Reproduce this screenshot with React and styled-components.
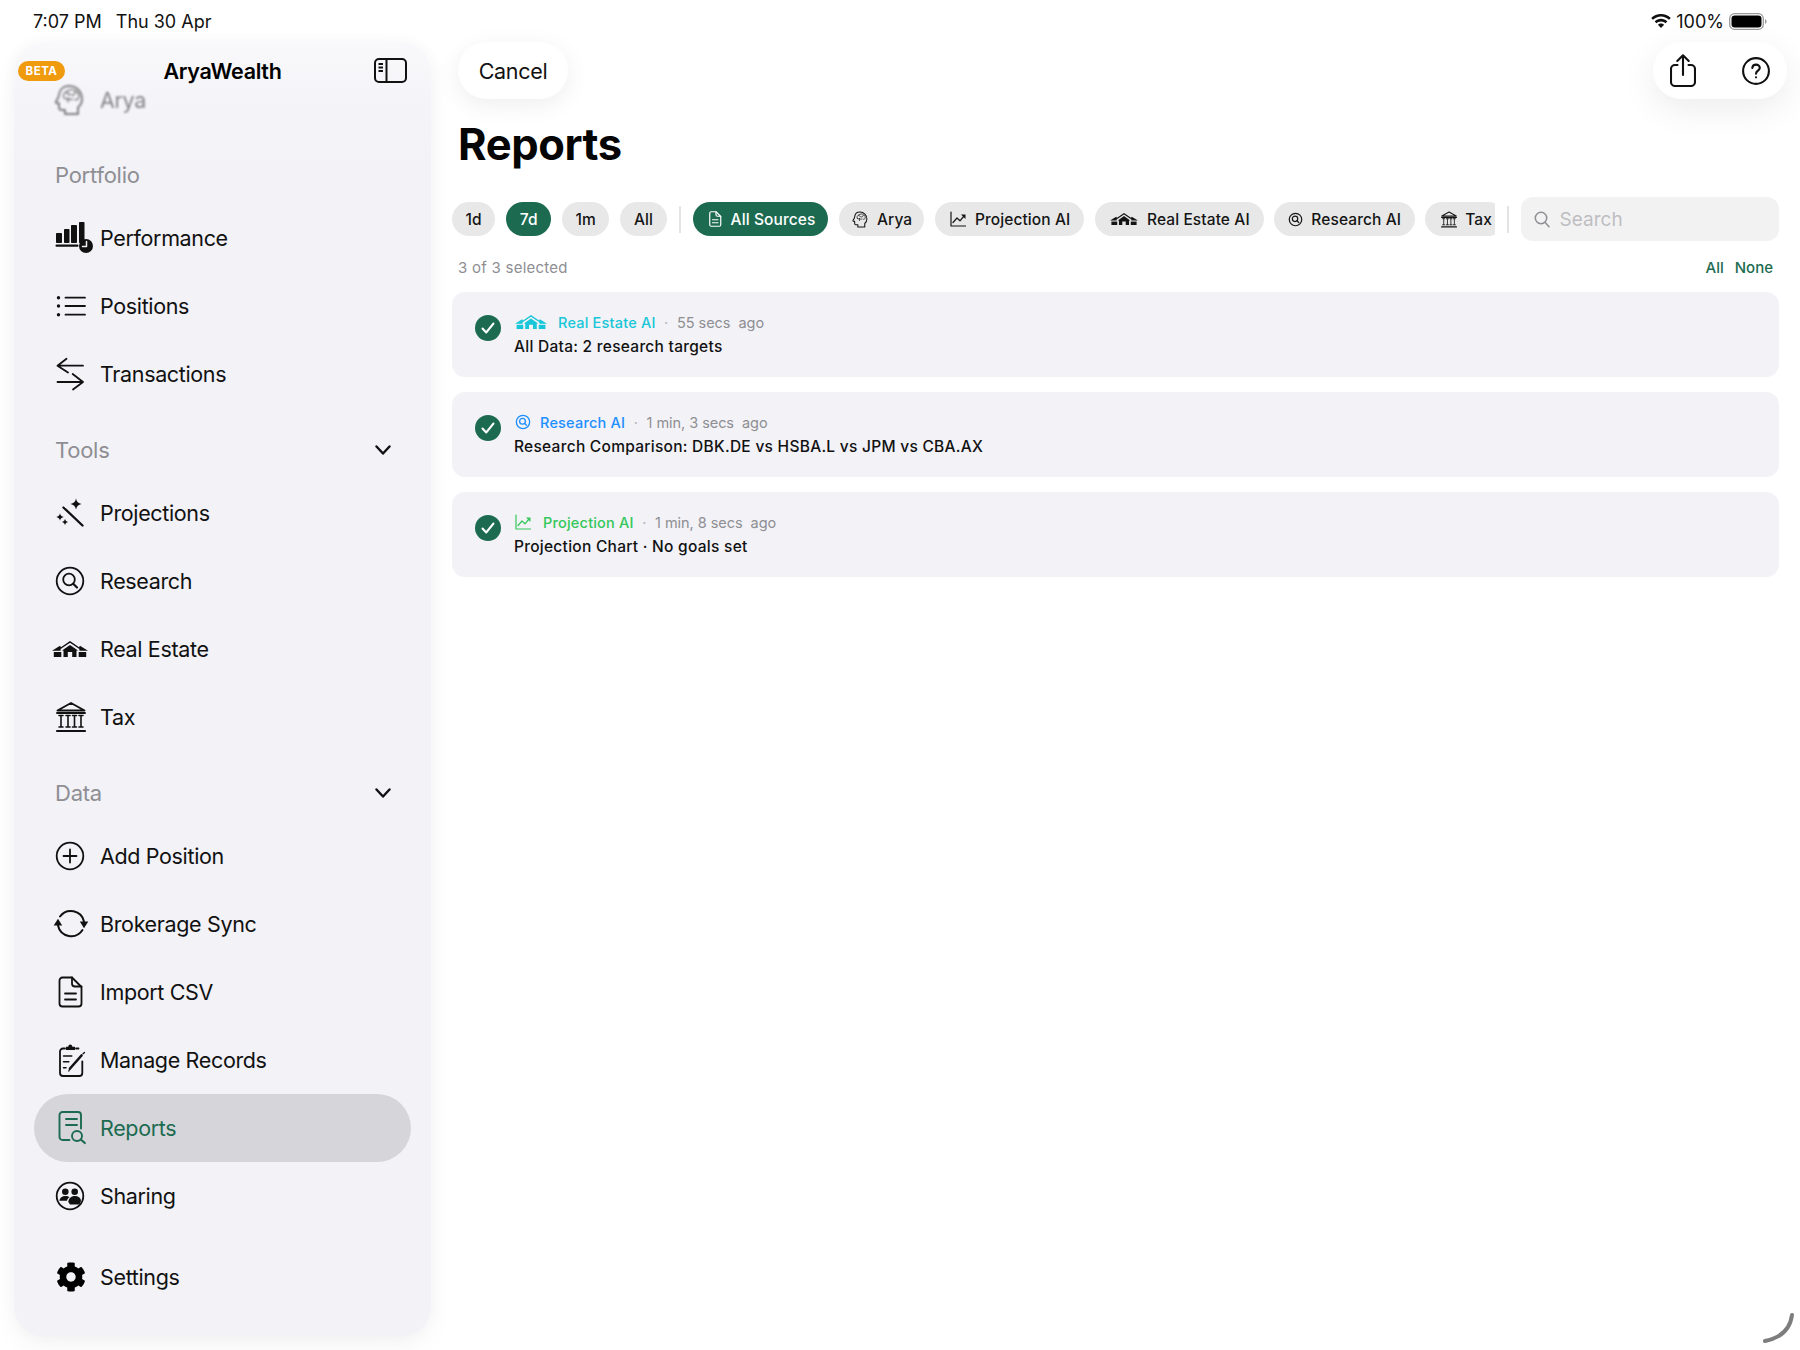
import React from "react";
import styled, { createGlobalStyle } from "styled-components";
import { FaCog } from "react-icons/fa";

const Global = createGlobalStyle`
  html, body { margin: 0; padding: 0; background: #fff; }
  body { font-family: Inter, "Noto Sans", sans-serif; color: #000; -webkit-font-smoothing: antialiased; }
  * { box-sizing: border-box; }
`;

const GREEN = "#1C6B50";

const Page = styled.div`
  position: relative; width: 1800px; height: 1350px; overflow: hidden; background: #fff;
  display: flex; flex-direction: column;
`;
const StatusBar = styled.div`
  height: 42px; flex: none; display: flex; justify-content: space-between; align-items: center;
  padding: 0 33px 0 33px; font-size: 18px; color: #111; 
`;
const StatusLeft = styled.div`display: flex; gap: 14px;`;
const StatusRight = styled.div`display: flex; align-items: center; gap: 5px; font-size: 18px;`;
const Body = styled.div`flex: 1; display: flex; min-height: 0;`;

const Sidebar = styled.aside`
  position: relative; width: 417px; margin: 0 1px 13px 14px; flex: none; border-radius: 30px;
  background: linear-gradient(#f9f9fb 0, #f3f3f8 80px, #f2f2f7 120px);
  box-shadow: 0 10px 28px rgba(0,0,0,.04), 0 0 16px rgba(0,0,0,.03);
  padding: 24px 20px 0;
`;
const SideHeader = styled.div`
  position: absolute; top: 8px; left: 0; right: 0; height: 42px;
  display: flex; align-items: center; justify-content: center;
`;
const Beta = styled.span`
  position: absolute; left: 4px; top: 11px; height: 20px; width: 47px; border-radius: 10px; background: #F09A0E;
  color: #fff; font-size: 11.5px; font-weight: 700; letter-spacing: .5px; display: flex; align-items: center; justify-content: center;
`;
const AppTitle = styled.span`font-size: 21.5px; font-weight: 600; letter-spacing: -.29px;`;
const ToggleBtn = styled.span`position: absolute; right: 24px; top: 8px; display: flex;`;

const Row = styled.div`
  height: 68px; display: flex; align-items: center; gap: 14px; padding-left: 20px; border-radius: 34px;
  font-size: 21.5px; letter-spacing: -.35px;
  color: ${p => (p.$active ? GREEN : "#111")};
  background: ${p => (p.$active ? "#D5D5DA" : "transparent")};
  margin-top: ${p => p.$mt || 0}px;
  ${p => p.$ghost && `filter: blur(1px); opacity: .5;`}
`;
const IconBox = styled.span`
  width: 32px; height: 32px; flex: none; display: flex; align-items: center; justify-content: center;
  svg { overflow: visible; display: block; }
`;
const SectionLabel = styled.div`
  height: 40px; margin-top: ${p => p.$mt}px; margin-bottom: 9px; padding: 0 20px 0 21px;
  display: flex; align-items: center; justify-content: space-between;
  font-size: 22px; color: #8e8e93; letter-spacing: -.25px;
`;

const Main = styled.main`
  flex: 1; min-width: 0; padding: 0 21px 0 20px; display: flex; flex-direction: column;
`;
const Toolbar = styled.div`display: flex; justify-content: space-between; height: 57px; flex: none;`;
const CancelBtn = styled.div`
  margin-left: 6px; width: 110px; height: 57px; border-radius: 29px; background: #fff;
  box-shadow: 0 6px 24px rgba(0,0,0,.07); display: flex; align-items: center; justify-content: center;
  font-size: 21.5px; color: #111; letter-spacing: -.3px;
`;
const ToolGroup = styled.div`
  margin-right: -8px; width: 134px; height: 57px; border-radius: 29px; background: #fff;
  box-shadow: 0 10px 34px rgba(0,0,0,.08); display: flex; align-items: center; justify-content: space-between; padding: 0 17px 0 17px;
`;
const Title = styled.h1`
  margin: 20px 0 0 6px; font-size: 43.5px; line-height: 50px; font-weight: 700; letter-spacing: -.4px; color: #050505;
`;
const FilterRow = styled.div`
  margin-top: 28px; display: flex; align-items: center; height: 44px; flex: none;
`;
const Chip = styled.div`
  height: 34px; flex: none; border-radius: 17px; display: flex; align-items: center; gap: ${p => p.$gap || 8}px;
  padding: 0 ${p => p.$pr || 13.5}px 0 ${p => p.$pl || 13.5}px; font-size: 15.5px; font-weight: 500; letter-spacing: .1px;
  background: ${p => (p.$active ? GREEN : "#E8E8E9")};
  color: ${p => (p.$active ? "#fff" : "#151515")};
`;
const ChipGroup = styled.div`display: flex; gap: 11px; flex: none;`;
const SourceScroller = styled.div`display: flex; gap: 10.6px; width: 802px; overflow: hidden; flex: none;`;
const Divider = styled.span`width: 2px; height: 27px; background: #E4E4E6; flex: none; margin: 0 ${p => p.$r}px 0 ${p => p.$l}px;`;
const SearchBox = styled.div`
  flex: 1; height: 44px; border-radius: 12px; background: #F2F2F3; display: flex; align-items: center; gap: 10px;
  padding-left: 13px; color: #BEBEC2; font-size: 19px;
`;
const SelectRow = styled.div`
  margin-top: 16px; height: 20px; display: flex; justify-content: space-between; align-items: center; padding: 0 6px; font-size: 15px; flex: none;
`;
const Muted = styled.span`color: #8e8e93; letter-spacing: .25px;`;
const Links = styled.span`display: flex; gap: 11px; color: ${GREEN}; font-weight: 500;`;
const CardList = styled.div`margin-top: 15px; display: flex; flex-direction: column; gap: 15.5px;`;
const Card = styled.div`
  height: 84.5px; border-radius: 13px; background: #F2F2F7; display: flex; align-items: flex-start; padding: 20px 0 0 23px; gap: 13px;
`;
const Check = styled.span`
  width: 26px; height: 26px; border-radius: 50%; background: ${GREEN}; flex: none; display: flex; align-items: center; justify-content: center; margin-top: 3px;
`;
const CardText = styled.div`display: flex; flex-direction: column; gap: 5px;`;
const Meta = styled.div`display: flex; align-items: center; font-size: 14.5px; height: 20px; color: #8e8e93; letter-spacing: .2px;`;
const SourceIcon = styled.span`color: ${p => p.$c}; display: flex; margin-left: 1px;`;
const SourceName = styled.span`color: ${p => p.$c}; font-weight: 500; margin-left: ${p => p.$ml}px;`;
const Dot = styled.span`margin: 0 8.5px; color: #b5b5ba;`;
const Ago = styled.span`white-space: pre; letter-spacing: -.05px;`;
const CardTitle = styled.div`font-size: 15.5px; font-weight: 550; color: #111; line-height: 20px; letter-spacing: .27px;`;
const HomeArc = styled.svg`position: absolute; right: 0; bottom: 0;`;
const GearWrap = styled.span`display: flex; margin-left: 1px; color: #000;`;

const S = ({ size = 32, vb = "0 0 32 32", w, h, sw = 1.8, children, fill = "none" }) => (
  <svg width={w || size} height={h || size} viewBox={vb} fill={fill} stroke="currentColor" strokeWidth={sw} strokeLinecap="round" strokeLinejoin="round">{children}</svg>
);

const HeadIcon = ({ size = 32 }) => (
  <S size={size} sw={2}>
    <path d="M15 2C9 2 5.500 6 5 11c-.2 1.600-.5 2.500-1.500 4L2 17.500c-.5 1 0 1.800 1.200 1.800H5v4c0 1.600 1 2.700 2.700 2.700H11V30h13v-6.500c2.800-2.300 4-5 4-8.500C28 7.500 22.500 2 15 2z" />
    <path d="M10 14c-1.500-2.500 0-6 3-6.500 2-2.500 7-2.500 9 0 2.500 1 3.500 4 2.500 6.500-.6 1.600-2.500 2-3.500 1.500M13 8c.5 2 2 3 4 2.500M21 8.500c-.5 1.500-1 2.500-2.500 3M10 14c1.500 1 3 1 4 0 1 1.500 3 2 4.500 1M14 14v4" strokeWidth="1.400"/>
  </S>
);
const PerfIcon = () => (
  <S sw={0} fill="currentColor">
    <rect x="2" y="11" width="6" height="10" rx=".8"/>
    <rect x="10" y="7" width="5.500" height="14" rx=".8"/>
    <rect x="17" y="3" width="6" height="18" rx=".8"/>
    <rect x="25" y="0" width="5.500" height="21" rx=".8"/>
    <rect x="1.500" y="22.500" width="23" height="2.300" rx="1"/>
    <circle cx="32" cy="24" r="7"/>
    <path d="M32.500 19.500V24.500H28.500" fill="none" stroke="#f2f2f7" strokeWidth="1.500"/>
  </S>
);
const ListIcon = () => (
  <S sw={1.8}>
    <path d="M11.500 7.700H31M11.500 16H31M11.500 24.700H31"/>
    <g fill="currentColor" stroke="none"><circle cx="4.500" cy="7.700" r="1.700"/><circle cx="4.500" cy="16" r="1.700"/><circle cx="4.500" cy="24.700" r="1.700"/></g>
  </S>
);
const SwapIcon = () => (
  <S sw={1.8}>
    <path d="M29 7.700H3.500M12.500 .8 3.500 7.700 14 14.500M3.500 24H29M18.700 16 29 24 19 31.500"/>
  </S>
);
const Star = ({ x, y, r }) => (
  <path d={`M${x} ${y - r}Q${x + r * .15} ${y - r * .15} ${x + r} ${y}Q${x + r * .15} ${y + r * .15} ${x} ${y + r}Q${x - r * .15} ${y + r * .15} ${x - r} ${y}Q${x - r * .15} ${y - r * .15} ${x} ${y - r}Z`} fill="currentColor" stroke="none"/>
);
const WandIcon = () => (
  <S sw={2.400}>
    <path d="M9.500 10.500 28.500 28.500" />
    <path d="M9 8.200 12 11" stroke="#f2f2f7" strokeWidth=".8"/>
    <Star x={22} y={7} r={5.500}/><Star x={6} y={20} r={3.800}/><Star x={11} y={25} r={3}/>
  </S>
);
const SearchCircleIcon = ({ size = 32 }) => (
  <S size={size} sw={size < 20 ? 2.600 : 1.8}>
    <circle cx="16" cy="16" r="13.300"/><circle cx="15" cy="14.500" r="5.800"/><path d="M19.200 18.700 23 22.500" strokeWidth={size < 20 ? 2.600 : 2.200}/>
  </S>
);
const EstateIcon = ({ w = 36 }) => (
  <svg width={w} height={w * 16 / 36} viewBox="0 0 36 16" fill="currentColor">
    <path d="M9 7 18 1l9 6" fill="none" stroke="currentColor" strokeWidth="1.500" strokeLinecap="round"/>
    <path fillRule="evenodd" d="M18 4l8 5.500h-1.500V16h-13V9.500H10zM15.800 11v5h4.400v-5z"/>
    <path d="M0 9.800 8 4.800l1 1.500-.5 3.500zM36 9.800 28 4.800l-1 1.500.5 3.500z"/>
    <rect x="1.800" y="11" width="7.500" height="5"/>
    <rect x="26.700" y="11" width="7.500" height="5"/>
  </svg>
);
const BankIcon = ({ size = 32 }) => (
  <S size={size} sw={1.900}>
    <path d="M3.500 9.500 17 2l13.500 7.500zM3 12h28" strokeWidth="1.900"/>
    <path d="M7 14.500v11M14 14.500v11M20.500 14.500v11M27 14.500v11M5 14.500h4M12 14.500h4M18.500 14.500h4M25 14.500h4M5 26h4M12 26h4M18.500 26h4M25 26h4" strokeWidth="1.600"/>
    <path d="M3 30h28" strokeWidth="2.200"/>
  </S>
);
const PlusCircleIcon = () => (
  <S sw={1.8}><circle cx="16" cy="16" r="13.300"/><path d="M16 9.500v13M9.500 16h13"/></S>
);
const SyncIcon = () => (
  <S sw={2}>
    <path d="M6 8.500A13.500 13.500 0 0 1 30 13.500M28.500 22A13.500 13.500 0 0 1 4 17.500"/>
    <path d="M25.800 13.500H34.300L30 20.300zM-.3 17.500H8.200L4 10.800z" fill="currentColor" stroke="none"/>
  </S>
);
const DocIcon = ({ size = 32 }) => (
  <S size={size} sw={size < 24 ? 2.400 : 1.800}>
    <path d="M8 1.500h10l9.500 9.500v16.500a3 3 0 0 1-3 3H8.500a3 3 0 0 1-3-3v-23a3 3 0 0 1 3-3z"/>
    <path d="M18 1.500v6a3 3 0 0 0 3 3h6.500M11 17.500h11M11 23.500h11"/>
  </S>
);
const ClipIcon = () => (
  <S sw={1.800}>
    <path d="M11 4.500H9a3 3 0 0 0-3 3v21.500a3 3 0 0 0 3 3h16.300a3 3 0 0 0 3-3V17.500M22 4.500h2.500"/>
    <path d="M12 6V2.800h2.200c.4-3.200 3.800-3.200 4.200 0H21V6z" fill="currentColor" stroke="none"/>
    <path d="M9.500 12h8.300M9.500 17.700h5.300M9.500 23.700h2.500" strokeWidth="1.500"/>
    <path d="M16 24.500 27.500 11.500" strokeWidth="2.600"/>
    <path d="M29 9.800 30.500 8.500M14.800 27 15.800 25" strokeWidth="1.300"/>
  </S>
);
const ReportIcon = () => (
  <S sw={1.900}>
    <path d="M15.500 28H8.500a3 3 0 0 1-3-3V3a3 3 0 0 1 3-3H24a3 3 0 0 1 3 3v13.500M12 7h11M12 13h11"/>
    <circle cx="23" cy="24" r="5"/><path d="M26.800 27.500 30.800 31" strokeWidth="2.200"/>
  </S>
);
const PeopleIcon = () => (
  <S sw={1.8}>
    <circle cx="16" cy="16" r="13.300"/>
    <g fill="currentColor" stroke="none">
      <circle cx="11.300" cy="11.800" r="3.300"/><circle cx="20.700" cy="11.800" r="3.300"/>
      <path d="M5.300 20.800c.5-3 2.800-4.800 6-4.800 1.800 0 3.200.4 4.200 1.200-1.500 1-2.200 2-2.500 3.600H5.300z"/>
      <path d="M14.300 22c.3-3.500 2.800-6 6.400-6 3.500 0 6 1.800 6.300 5L25.500 24.500H16z"/>
    </g>
  </S>
);
const PanelIcon = () => (
  <svg width="33" height="25" viewBox="0 0 33 25" fill="none" stroke="#111" strokeWidth="2">
    <rect x="1" y="1" width="31" height="23" rx="4"/><path d="M12.500 1v23"/>
    <path d="M4.500 6H9M4.500 9.500H9M4.500 13H9" strokeWidth="1.800"/>
  </svg>
);
const Chevron = () => (
  <svg width="16" height="10" viewBox="0 0 16 10" fill="none" stroke="#111" strokeWidth="2.400" strokeLinecap="round" strokeLinejoin="round"><path d="M1.500 1.500 8 8.500l6.500-7"/></svg>
);
const ChartIcon = ({ size = 16 }) => (
  <S size={size} vb="0 0 16 16" sw={1.200}>
    <path d="M1 1v14h14.500M3 11.500 7 7l3 2.800L14 5"/>
    <path d="M11 3.500h4.500V8z" fill="currentColor" stroke="none"/>
  </S>
);
const ShareIcon = () => (
  <svg width="26" height="33" viewBox="0 0 26 33" fill="none" stroke="#111" strokeWidth="2.100" strokeLinecap="round" strokeLinejoin="round">
    <path d="M7.500 11H5a4 4 0 0 0-4 4v13a4 4 0 0 0 4 4h16a4 4 0 0 0 4-4V15a4 4 0 0 0-4-4h-2.500M13 21V1.500M7.300 7 13 1.300 18.700 7"/>
  </svg>
);
const HelpIcon = () => (
  <svg width="28" height="28" viewBox="0 0 28 28" fill="none" stroke="#111" strokeWidth="2.100" strokeLinecap="round">
    <circle cx="14" cy="14" r="12.900"/>
    <path d="M10.300 11c.2-2.200 1.800-3.400 3.800-3.400s3.700 1.300 3.700 3.200c0 2.900-3.800 2.900-3.800 5.900"/>
    <circle cx="14" cy="20.300" r="1.100" fill="#111" stroke="none"/>
  </svg>
);
const SmallSearch = () => (
  <svg width="16" height="17" viewBox="0 0 16 17" fill="none" stroke="#8e8e93" strokeWidth="1.500" strokeLinecap="round"><circle cx="7" cy="7" r="5.700"/><path d="M11 11.300 15 15.800"/></svg>
);
const WifiIcon = () => (
  <svg width="20" height="14" viewBox="0 0 20 14" fill="#111">
    <path d="M10 0c3.800 0 7.300 1.500 9.800 4L18 5.800C15.900 3.800 13.100 2.500 10 2.500S4.100 3.800 2 5.800L.2 4C2.700 1.500 6.200 0 10 0z"/>
    <path d="M10 4.800c2.500 0 4.700 1 6.300 2.600l-1.800 1.800C13.400 8.100 11.800 7.400 10 7.400s-3.400.7-4.500 1.800L3.700 7.400C5.300 5.800 7.500 4.800 10 4.800z"/>
    <path d="M10 9.500c1.200 0 2.300.5 3.100 1.200L10 14l-3.100-3.300c.8-.7 1.900-1.200 3.100-1.200z"/>
  </svg>
);
const BatteryIcon = () => (
  <svg width="38" height="17" viewBox="0 0 38 17">
    <rect x=".7" y=".7" width="33.600" height="15.600" rx="4.800" fill="none" stroke="#9a9a9a" strokeWidth="1.300"/>
    <rect x="2.500" y="2.500" width="30" height="12" rx="3.300" fill="#000"/>
    <path d="M36 6v5c1-.4 1.600-1.400 1.600-2.500S37 6.400 36 6z" fill="#9a9a9a"/>
  </svg>
);
const CheckMark = () => (
  <svg width="14" height="12" viewBox="0 0 14 12" fill="none" stroke="#fff" strokeWidth="2" strokeLinecap="round" strokeLinejoin="round"><path d="M1.500 6.500 5.200 10.500 12.500 1.500"/></svg>
);

const rows1 = [["Performance", <PerfIcon />], ["Positions", <ListIcon />], ["Transactions", <SwapIcon />]];
const rows2 = [["Projections", <WandIcon />], ["Research", <SearchCircleIcon />], ["Real Estate", <EstateIcon />], ["Tax", <BankIcon />]];
const rows3 = [["Add Position", <PlusCircleIcon />], ["Brokerage Sync", <SyncIcon />], ["Import CSV", <DocIcon />], ["Manage Records", <ClipIcon />], ["Reports", <ReportIcon />, true], ["Sharing", <PeopleIcon />]];

const NavRow = ({ item }) => (
  <Row $active={item[2]}><IconBox>{item[1]}</IconBox>{item[0]}</Row>
);

const cards = [
  { icon: <EstateIcon w={32} />, color: "#17C6D8", name: "Real Estate AI", ago: "55 secs  ago", title: "All Data: 2 research targets", ml: 11 },
  { icon: <SearchCircleIcon size={16} />, color: "#1E8FFF", name: "Research AI", ago: "1 min, 3 secs  ago", title: "Research Comparison: DBK.DE vs HSBA.L vs JPM vs CBA.AX", ml: 9 },
  { icon: <ChartIcon size={16} />, color: "#34C759", name: "Projection AI", ago: "1 min, 8 secs  ago", title: "Projection Chart · No goals set", ml: 12 },
];

export default function App() {
  return (
    <Page>
      <Global />
      <StatusBar>
        <StatusLeft><span>7:07 PM</span><span>Thu 30 Apr</span></StatusLeft>
        <StatusRight><WifiIcon /><span>100%</span><BatteryIcon /></StatusRight>
      </StatusBar>
      <Body>
        <Sidebar>
          <SideHeader>
            <Beta>BETA</Beta>
            <AppTitle>AryaWealth</AppTitle>
            <ToggleBtn><PanelIcon /></ToggleBtn>
          </SideHeader>
          <Row $ghost><IconBox><HeadIcon /></IconBox>Arya</Row>
          <SectionLabel $mt={21}>Portfolio</SectionLabel>
          {rows1.map(r => <NavRow key={r[0]} item={r} />)}
          <SectionLabel $mt={22}>Tools<Chevron /></SectionLabel>
          {rows2.map(r => <NavRow key={r[0]} item={r} />)}
          <SectionLabel $mt={21.5}>Data<Chevron /></SectionLabel>
          {rows3.map(r => <NavRow key={r[0]} item={r} />)}
          <Row $mt={13}><IconBox><GearWrap><FaCog size={30} /></GearWrap></IconBox>Settings</Row>
        </Sidebar>
        <Main>
          <Toolbar>
            <CancelBtn>Cancel</CancelBtn>
            <ToolGroup><ShareIcon /><HelpIcon /></ToolGroup>
          </Toolbar>
          <Title>Reports</Title>
          <FilterRow>
            <ChipGroup>
              <Chip>1d</Chip>
              <Chip $active>7d</Chip>
              <Chip>1m</Chip>
              <Chip>All</Chip>
            </ChipGroup>
            <Divider $l={12} $r={12} />
            <SourceScroller>
              <Chip $active $pl={14} $pr={13}><DocIcon size={16} />All Sources</Chip>
              <Chip $pl={13} $pr={12}><HeadIcon size={17} />Arya</Chip>
              <Chip $pl={15} $pr={14} $gap={9}><ChartIcon />Projection AI</Chip>
              <Chip $pl={15} $pr={14} $gap={9}><EstateIcon w={28} />Real Estate AI</Chip>
              <Chip $pl={14}><SearchCircleIcon size={15} />Research AI</Chip>
              <Chip $pl={15}><BankIcon size={17} />Tax</Chip>
            </SourceScroller>
            <Divider $l={12} $r={12} />
            <SearchBox><SmallSearch />Search</SearchBox>
          </FilterRow>
          <SelectRow>
            <Muted>3 of 3 selected</Muted>
            <Links><span>All</span><span>None</span></Links>
          </SelectRow>
          <CardList>
            {cards.map(c => (
              <Card key={c.name}>
                <Check><CheckMark /></Check>
                <CardText>
                  <Meta>
                    <SourceIcon $c={c.color}>{c.icon}</SourceIcon>
                    <SourceName $c={c.color} $ml={c.ml}>{c.name}</SourceName>
                    <Dot>·</Dot>
                    <Ago>{c.ago}</Ago>
                  </Meta>
                  <CardTitle>{c.title}</CardTitle>
                </CardText>
              </Card>
            ))}
          </CardList>
        </Main>
      </Body>
      <HomeArc width="40" height="40" viewBox="0 0 40 40" fill="none" stroke="#7d7d7d" strokeWidth="4" strokeLinecap="round">
        <path d="M32 5C30 20 20 28 5 31" />
      </HomeArc>
    </Page>
  );
}
